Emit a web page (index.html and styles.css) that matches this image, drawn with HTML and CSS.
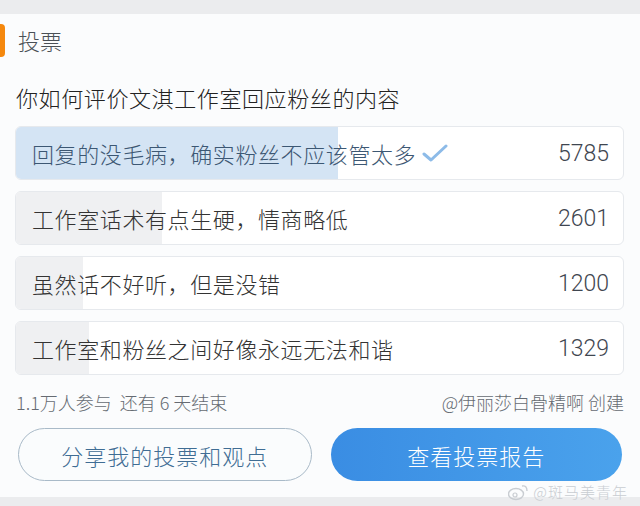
FILE: index.html
```html
<!DOCTYPE html>
<html lang="zh-CN">
<head>
<meta charset="utf-8">
<meta name="viewport" content="width=device-width, initial-scale=1.0">
<title>投票</title>
<link rel="stylesheet" href="styles.css">
</head>
<body>
<div class="card">
  <div class="vote_head">
    <span class="vote_bar"></span>
    <span class="vote_title">投票</span>
  </div>
  <div class="question">你如何评价文淇工作室回应粉丝的内容</div>

  <div class="options">
    <div class="opt opt_chosen">
      <div class="opt_fill" style="width: 53%;"></div>
      <span class="opt_text">回复的没毛病，确实粉丝不应该管太多</span>
      <svg class="tick" width="26" height="20" viewBox="0 0 26 20"><path d="M2 11 L9 17 L24 3" fill="none" stroke="#8dbbe8" stroke-width="3" stroke-linecap="round" stroke-linejoin="round"/></svg>
      <span class="opt_num">5785</span>
    </div>
    <div class="opt">
      <div class="opt_fill" style="width: 24%;"></div>
      <span class="opt_text">工作室话术有点生硬，情商略低</span>
      <span class="opt_num">2601</span>
    </div>
    <div class="opt">
      <div class="opt_fill" style="width: 11%;"></div>
      <span class="opt_text">虽然话不好听，但是没错</span>
      <span class="opt_num">1200</span>
    </div>
    <div class="opt">
      <div class="opt_fill" style="width: 12%;"></div>
      <span class="opt_text">工作室和粉丝之间好像永远无法和谐</span>
      <span class="opt_num">1329</span>
    </div>
  </div>

  <div class="vote_info">
    <span>1.1万人参与&nbsp;&nbsp;还有 6 天结束</span>
    <span>@伊丽莎白骨精啊 创建</span>
  </div>

  <div class="btn_row">
    <button class="btn_share">分享我的投票和观点</button>
    <button class="btn_report">查看投票报告</button>
  </div>
</div>

<div class="watermark">
  <svg width="22" height="18" viewBox="0 0 22 18"><ellipse cx="8" cy="11" rx="7.5" ry="5.5" fill="none" stroke="#c9cdd2" stroke-width="1.4"/><circle cx="7" cy="12" r="2" fill="none" stroke="#c9cdd2" stroke-width="1.2"/><path d="M14 3 Q19 2 19 8" fill="none" stroke="#c9cdd2" stroke-width="1.4"/></svg>
  <span>@斑马美青年</span>
</div>
</body>
</html>
```

FILE: styles.css
```css
html, body {
  margin: 0;
  padding: 0;
}

body {
  width: 640px;
  height: 506px;
  background: #ebecee;
  font-family: "Noto Sans CJK SC", "Noto Sans", sans-serif;
  font-weight: 300;
  position: relative;
  overflow: hidden;
}

.card {
  margin-top: 14px;
  height: 483px;
  background: #fbfcfd;
  display: flex;
  flex-direction: column;
}

.vote_head {
  margin-top: 10px;
  height: 33px;
  display: flex;
  align-items: center;
}

.vote_bar {
  width: 5px;
  height: 33px;
  background: #f5880e;
  border-radius: 0 4px 4px 0;
}

.vote_title {
  margin-left: 13px;
  font-size: 22px;
  line-height: 33px;
  color: #4a5056;
}

.question {
  margin: 25px 0 0 16px;
  font-size: 22px;
  line-height: 30px;
  letter-spacing: 0.6px;
  color: #222;
}

.options {
  margin: 14px 16px 0 15px;
  display: flex;
  flex-direction: column;
  gap: 11px;
}

.opt {
  position: relative;
  height: 54px;
  box-sizing: border-box;
  border: 1px solid #e6e9ed;
  border-radius: 6px;
  background: #fff;
  overflow: hidden;
  display: flex;
  align-items: center;
  padding: 0 14px 0 16px;
}

.opt_fill {
  position: absolute;
  left: 0;
  top: 0;
  bottom: 0;
  background: #eff0f2;
}

.opt_chosen .opt_fill {
  background: #d4e4f4;
}

.opt_text {
  position: relative;
  font-size: 22px;
  letter-spacing: 0.6px;
  color: #333;
}

.opt_chosen .opt_text {
  color: #3c5773;
}

.tick {
  position: relative;
  margin-left: 6px;
}

.opt_num {
  position: relative;
  margin-left: auto;
  font-family: Roboto, "Noto Sans", sans-serif;
  font-weight: 300;
  font-size: 23px;
  color: #3f4650;
}

.vote_info {
  margin: 15px 16px 0 16px;
  display: flex;
  justify-content: space-between;
  font-size: 18px;
  line-height: 24px;
  color: #666b72;
}

.btn_row {
  margin: 14px 18px 0 18px;
  display: flex;
  gap: 19px;
}

.btn_row button {
  flex: 1;
  height: 53px;
  border-radius: 27px;
  font-family: "Noto Sans CJK SC", sans-serif;
  font-weight: 300;
  font-size: 22px;
  letter-spacing: 1px;
  cursor: pointer;
}

.btn_share {
  background: #fafcfd;
  border: 1px solid #a9bac8;
  color: #3f6d94;
}

.btn_report {
  border: none;
  background: linear-gradient(to right, #3a8de3, #4aa2ec);
  color: #fff;
  font-weight: 400;
}

.watermark {
  position: absolute;
  right: 12px;
  bottom: 4px;
  display: flex;
  align-items: center;
  gap: 3px;
  font-size: 15px;
  color: #c9cdd2;
  letter-spacing: 1px;
}
```
